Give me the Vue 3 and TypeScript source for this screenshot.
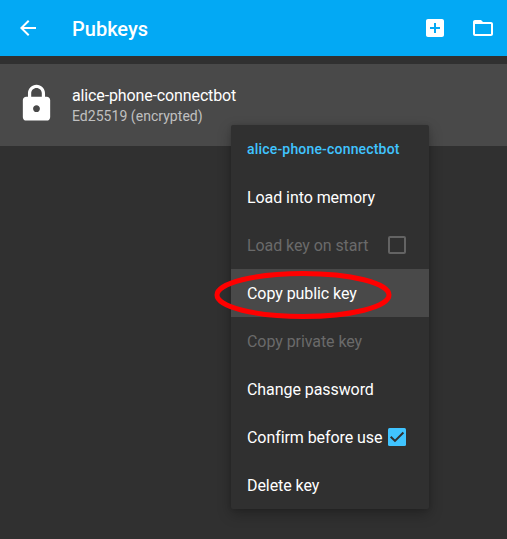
<script setup lang="ts">
interface MenuItem {
  label: string
  disabled?: boolean
  active?: boolean
  checked?: boolean
}

const keyName = 'alice-phone-connectbot'

const items: MenuItem[] = [
  { label: 'Load into memory' },
  { label: 'Load key on start', disabled: true, checked: false },
  { label: 'Copy public key', active: true },
  { label: 'Copy private key', disabled: true },
  { label: 'Change password' },
  { label: 'Confirm before use', checked: true },
  { label: 'Delete key' },
]
</script>

<template>
  <div class="screen">
    <header class="bar">
      <svg class="icon" viewBox="0 0 24 24">
        <path d="M20 11H7.83l5.59-5.59L12 4l-8 8 8 8 1.41-1.41L7.83 13H20v-2z" />
      </svg>
      <h1 class="title">Pubkeys</h1>
      <svg class="icon" viewBox="0 0 24 24">
        <path d="M19 3H5c-1.11 0-2 .9-2 2v14c0 1.1.89 2 2 2h14c1.1 0 2-.9 2-2V5c0-1.1-.9-2-2-2zm-2 10h-4v4h-2v-4H7v-2h4V7h2v4h4v2z" />
      </svg>
      <svg class="icon" viewBox="0 0 24 24">
        <path d="M20 6h-8l-2-2H4c-1.1 0-1.99.9-1.99 2L2 18c0 1.1.9 2 2 2h16c1.1 0 2-.9 2-2V8c0-1.1-.9-2-2-2zm0 12H4V8h16v10z" />
      </svg>
    </header>

    <main class="list">
      <div class="row">
        <svg class="lock" viewBox="0 0 24 24">
          <path d="M18 8h-1V6c0-2.76-2.24-5-5-5S7 3.24 7 6v2H6c-1.1 0-2 .9-2 2v10c0 1.1.9 2 2 2h12c1.1 0 2-.9 2-2V10c0-1.1-.9-2-2-2zm-6 9c-1.1 0-2-.9-2-2s.9-2 2-2 2 .9 2 2-.9 2-2 2zm3.1-9H8.9V6c0-1.71 1.39-3.1 3.1-3.1 1.71 0 3.1 1.39 3.1 3.1v2z" />
        </svg>
        <div class="texts">
          <div class="name">{{ keyName }}</div>
          <div class="kind">Ed25519 (encrypted)</div>
        </div>
      </div>
    </main>

    <div class="menu">
      <div class="item heading">{{ keyName }}</div>
      <div
        v-for="item in items"
        :key="item.label"
        class="item"
        :class="{ disabled: item.disabled, active: item.active }"
      >
        <span>{{ item.label }}</span>
        <svg v-if="item.checked !== undefined" class="check" viewBox="0 0 18 18">
          <template v-if="item.checked">
            <rect class="fill" width="18" height="18" rx="1.5" />
            <path class="tick" d="M2.7 8.7 7 12.9 15.4 4.5" />
          </template>
          <rect v-else class="outline" x="1" y="1" width="16" height="16" rx="1" />
        </svg>
      </div>
      <svg class="ring" viewBox="0 0 178 50">
        <ellipse cx="89" cy="25" rx="86" ry="21.5" />
      </svg>
    </div>
  </div>
</template>

<style>
body {
  background: #303030;
}
</style>

<style scoped>
.screen {
  position: relative;
  height: 539px;
  overflow: hidden;
  background: #303030;
  color: #fff;
  font-family: Roboto, sans-serif;
}
.bar {
  display: flex;
  align-items: center;
  height: 56px;
  padding: 0 12px 0 16px;
  gap: 24px;
  box-sizing: border-box;
  background: #03a9f4;
}
.icon {
  width: 24px;
  height: 24px;
  flex: none;
  fill: #fff;
}
.title {
  flex: 1;
  margin: 0 0 0 8px;
  padding-top: 2px;
  font-size: 20px;
  line-height: 24px;
  font-weight: 500;
}
.list {
  padding-top: 8px;
}
.row {
  display: flex;
  height: 82px;
  padding-left: 15.5px;
  background: #494949;
}
.lock {
  width: 41px;
  height: 41px;
  margin-top: 19.3px;
  fill: #fff;
}
.texts {
  margin: 22px 0 0 15.5px;
}
.name {
  font-size: 16px;
  line-height: 20px;
  letter-spacing: -0.13px;
}
.kind {
  font-size: 14px;
  line-height: 20px;
  letter-spacing: 0.04px;
  color: #c0c0c0;
}
.menu {
  position: absolute;
  left: 231px;
  top: 125px;
  width: 198px;
  border-radius: 2px;
  background: #303030;
  box-shadow: 0 5px 14px rgba(0, 0, 0, 0.28), 0 0 4px rgba(0, 0, 0, 0.12);
}
.item {
  display: flex;
  align-items: center;
  justify-content: space-between;
  height: 48px;
  padding: 1px 23px 0 16px;
  box-sizing: border-box;
  font-size: 16px;
  letter-spacing: -0.07px;
  white-space: nowrap;
}
.heading {
  padding: 0 23px 1px 16px;
  color: #40c4ff;
  font-size: 14px;
  font-weight: 500;
  letter-spacing: 0.18px;
}
.disabled {
  color: #6a6a6a;
}
.active {
  background: #494949;
}
.check {
  width: 18px;
  height: 18px;
  margin-top: -1px;
}
.fill {
  fill: #40c4ff;
}
.tick {
  fill: none;
  stroke: #303030;
  stroke-width: 2;
}
.outline {
  fill: none;
  stroke: #636363;
  stroke-width: 2;
}
.ring {
  position: absolute;
  left: -17px;
  top: 145px;
  width: 178px;
  height: 50px;
}
.ring ellipse {
  fill: none;
  stroke: #f00;
  stroke-width: 5;
}
</style>
